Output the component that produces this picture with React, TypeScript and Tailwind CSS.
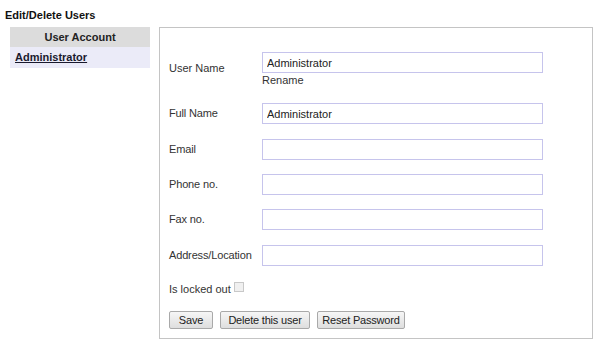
import React from 'react';

const fields = [
  { label: 'Full Name', value: 'Administrator', mt: 'mt-[17px]' },
  { label: 'Email', value: '', mt: 'mt-[15px]' },
  { label: 'Phone no.', value: '', mt: 'mt-[14px]' },
  { label: 'Fax no.', value: '', mt: 'mt-[14px]' },
  { label: 'Address/Location', value: '', mt: 'mt-[15px]' },
];

const Field = ({ value }: { value: string }) => (
  <input
    readOnly
    value={value}
    className="w-[281px] h-[21px] border border-[#c6c4ec] bg-white px-[4px] text-[11px] text-[#222] outline-none"
  />
);

const Button = ({ children, className }: { children: React.ReactNode; className: string }) => (
  <button
    className={`h-[18px] border border-[#a9a9a9] rounded-[2px] bg-gradient-to-b from-[#f6f6f6] to-[#dedede] text-[11px] leading-none text-[#222] tracking-[-0.2px] ${className}`}
  >
    {children}
  </button>
);

export default function App() {
  return (
    <div className="w-[602px] h-[346px] bg-white text-[#333] text-[11px] font-['Liberation_Sans',Arial,sans-serif] pl-[5px] pt-[9px]">
      <h1 className="font-bold text-[11px] leading-[13px] text-[#111]">Edit/Delete Users</h1>

      <div className="flex mt-[5px]">
        {/* account list */}
        <div className="ml-[5px] w-[140px] self-start">
          <div className="h-[20px] bg-[#dcdcdc] flex items-center justify-center font-bold text-[#222]">
            User Account
          </div>
          <div className="h-[21px] bg-[#ebebf8] flex items-center px-[5px]">
            <a className="font-bold underline text-[#1a1a2e]">Administrator</a>
          </div>
        </div>

        {/* edit form */}
        <div className="ml-[9px] w-[434px] h-[312px] border border-[#c4c4c4] pt-[24px] pl-[9px]">
          <div className="flex items-center h-[34px]">
            <span className="w-[93px] -mt-[1px]">User Name</span>
            <div className="flex flex-col self-start">
              <Field value="Administrator" />
              <span className="mt-[1px] leading-[12px]">Rename</span>
            </div>
          </div>

          {fields.map((f) => (
            <div key={f.label} className={`flex items-center ${f.mt}`}>
              <span className="w-[93px] tracking-[-0.15px]">{f.label}</span>
              <Field value={f.value} />
            </div>
          ))}

          <div className="flex items-center mt-[17px] h-[12px]">
            <span>Is locked out</span>
            <span className="ml-[3px] -mt-[4px] w-[10px] h-[10px] border border-[#c8c8c8] bg-[#f0f0f0]" />
          </div>

          <div className="flex gap-[7px] mt-[16px]">
            <Button className="w-[44px]">Save</Button>
            <Button className="w-[90px]">Delete this user</Button>
            <Button className="w-[88px]">Reset Password</Button>
          </div>
        </div>
      </div>
    </div>
  );
}
